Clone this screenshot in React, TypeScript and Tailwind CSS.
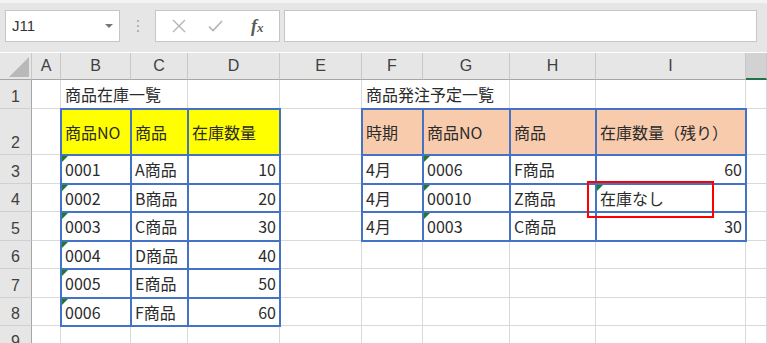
import React from "react";

const FONT = { fontFamily: '"Noto Sans CJK JP", "Noto Sans", sans-serif' };

type CellProps = {
  text?: string;
  right?: boolean;
  bg?: string;
  blue?: boolean;
  tri?: boolean;
  noRight?: boolean;
};

function Tri() {
  return (
    <span className="absolute left-[1px] top-[1px] w-0 h-0 border-t-[6px] border-r-[6px] border-t-[#1f7a2a] border-r-transparent" />
  );
}

function Cell({ text, right, bg, blue, tri, noRight }: CellProps) {
  return (
    <div
      className={[
        "relative flex items-center border-b border-[#d9d9d9] whitespace-nowrap text-[16px] text-[#2b2b2b] leading-none",
        noRight ? "" : "border-r",
        right ? "justify-end pr-[3px]" : "justify-start pl-[4px]",
        bg ?? "",
        blue ? "outline-2 outline-solid outline-[#4472c4] -outline-offset-1 z-10" : "",
      ].join(" ")}
    >
      {tri && <Tri />}
      <span className="relative">{text}</span>
    </div>
  );
}

function ColHead({ label, active }: { label: string; active?: boolean }) {
  return (
    <div
      className={[
        "flex items-center justify-center border-r border-[#c8c8c8] text-[16px] text-[#404040] mt-[1px]",
        active
          ? "bg-[#d2d2d2] border-b-2 border-b-[#217346]"
          : "bg-[#e6e6e6] border-b border-b-[#a6a6a6]",
      ].join(" ")}
      style={{ fontFamily: '"Liberation Sans", Arial, sans-serif' }}
    >
      {active ? "" : label}
    </div>
  );
}

function RowHead({ n }: { n: number }) {
  return (
    <div
      className="flex items-end justify-center pb-[3px] bg-[#e6e6e6] border-r border-b border-r-[#a6a6a6] border-b-[#d0d0d0] text-[16px] text-[#404040] leading-none"
      style={{ fontFamily: '"Liberation Sans", Arial, sans-serif' }}
    >
      {n}
    </div>
  );
}

const Y = "bg-[#ffff00]";
const P = "bg-[#f8cbad]";

type RowDef = Record<string, CellProps>;

const rows: RowDef[] = [
  { B: { text: "商品在庫一覧", noRight: true }, F: { text: "商品発注予定一覧", noRight: true } },
  {
    B: { text: "商品NO", bg: Y, blue: true },
    C: { text: "商品", bg: Y, blue: true },
    D: { text: "在庫数量", bg: Y, blue: true },
    F: { text: "時期", bg: P, blue: true },
    G: { text: "商品NO", bg: P, blue: true },
    H: { text: "商品", bg: P, blue: true },
    I: { text: "在庫数量（残り）", bg: P, blue: true },
  },
  {
    B: { text: "0001", blue: true, tri: true },
    C: { text: "A商品", blue: true },
    D: { text: "10", blue: true, right: true },
    F: { text: "4月", blue: true },
    G: { text: "0006", blue: true, tri: true },
    H: { text: "F商品", blue: true },
    I: { text: "60", blue: true, right: true },
  },
  {
    B: { text: "0002", blue: true, tri: true },
    C: { text: "B商品", blue: true },
    D: { text: "20", blue: true, right: true },
    F: { text: "4月", blue: true },
    G: { text: "00010", blue: true, tri: true },
    H: { text: "Z商品", blue: true },
    I: { text: "在庫なし", blue: true, tri: true },
  },
  {
    B: { text: "0003", blue: true, tri: true },
    C: { text: "C商品", blue: true },
    D: { text: "30", blue: true, right: true },
    F: { text: "4月", blue: true },
    G: { text: "0003", blue: true, tri: true },
    H: { text: "C商品", blue: true },
    I: { text: "30", blue: true, right: true },
  },
  {
    B: { text: "0004", blue: true, tri: true },
    C: { text: "D商品", blue: true },
    D: { text: "40", blue: true, right: true },
  },
  {
    B: { text: "0005", blue: true, tri: true },
    C: { text: "E商品", blue: true },
    D: { text: "50", blue: true, right: true },
  },
  {
    B: { text: "0006", blue: true, tri: true },
    C: { text: "F商品", blue: true },
    D: { text: "60", blue: true, right: true },
  },
  {},
];

const LETTERS = ["A", "B", "C", "D", "E", "F", "G", "H", "I", "J"];

function TopBar() {
  return (
    <div className="h-[52px] bg-[#e6e6e6] flex items-start pt-[10px] border-t-[3px] border-t-[#f3f3f3]" style={FONT}>
      <div className="ml-[5px] mt-[-3px] w-[115px] h-[32px] bg-white border border-[#c6c6c6] flex items-center justify-between pl-[6px] pr-[6px]">
        <span className="text-[15px] text-[#333]" style={{ fontFamily: '"Liberation Sans", Arial, sans-serif' }}>J11</span>
        <svg width="8" height="5" viewBox="0 0 8 5">
          <polygon points="0,0 8,0 4,4" fill="#777" />
        </svg>
      </div>
      <div className="w-[35px] h-[32px] mt-[-3px] flex items-center justify-center">
        <svg width="4" height="14" viewBox="0 0 4 14">
          <circle cx="2" cy="2" r="1.1" fill="#a8a8a8" />
          <circle cx="2" cy="7" r="1.1" fill="#a8a8a8" />
          <circle cx="2" cy="12" r="1.1" fill="#a8a8a8" />
        </svg>
      </div>
      <div className="w-[125px] h-[32px] mt-[-3px] bg-white border border-[#c6c6c6] flex items-center">
        <svg className="ml-[16px]" width="14" height="14" viewBox="0 0 14 14">
          <path d="M1 1 L13 13 M13 1 L1 13" stroke="#b3b3b3" strokeWidth="1.3" />
        </svg>
        <svg className="ml-[22px]" width="15" height="12" viewBox="0 0 15 12">
          <path d="M1 6.5 L5 10.5 L14 1" stroke="#b3b3b3" strokeWidth="1.6" fill="none" />
        </svg>
        <span
          className="ml-[28px] text-[18px] italic font-bold text-[#5a5a5a] leading-none"
          style={{ fontFamily: '"Liberation Serif", "DejaVu Serif", serif' }}
        >
          f<span className="text-[13px]">x</span>
        </span>
      </div>
      <div className="ml-[4px] mt-[-3px] w-[473px] h-[32px] bg-white border border-[#c6c6c6]" />
    </div>
  );
}

export default function App() {
  return (
    <div className="w-[767px] h-[343px] overflow-hidden bg-white relative" style={FONT}>
      <TopBar />
      <div className="grid grid-cols-[32px_29px_70px_57px_92px_82px_61px_87px_86px_150px_1fr] grid-rows-[28px_29px_46px_29px_28px_29px_28px_29px_28px_28px] bg-white">
        <div className="relative bg-[#e6e6e6] border-r border-b border-r-[#c8c8c8] border-b-[#a6a6a6] mt-[1px]">
          <svg className="absolute right-[2px] bottom-[2px]" width="20" height="20" viewBox="0 0 20 20">
            <polygon points="20,0 20,20 0,20" fill="#b9b9b9" />
          </svg>
        </div>
        {LETTERS.map((l) => (
          <ColHead key={l} label={l} active={l === "J"} />
        ))}
        {rows.map((r, i) => (
          <React.Fragment key={i}>
            <RowHead n={i + 1} />
            {LETTERS.map((l) => (
              <Cell key={l} {...(r[l] ?? {})} />
            ))}
          </React.Fragment>
        ))}
      </div>
      <div className="absolute left-[587px] top-[181px] w-[127px] h-[37px] border-2 border-[#ff0000] z-20" />
    </div>
  );
}
